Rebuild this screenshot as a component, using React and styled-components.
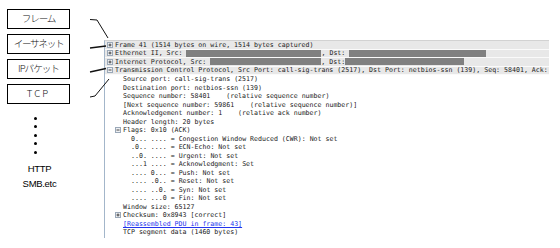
import React from "react";
import styled, { createGlobalStyle } from "styled-components";

const Global = createGlobalStyle`
  html, body { margin: 0; padding: 0; background: #fff; }
  body { width: 560px; height: 248px; overflow: hidden; }
`;

const Page = styled.div`
  position: relative;
  display: flex;
  align-items: flex-start;
  width: 560px;
  height: 248px;
  background: #fff;
`;

const Legend = styled.div`
  display: flex;
  flex-direction: column;
  align-items: center;
  width: 63px;
  margin-left: 7px;
  padding-top: 9px;
`;

const LayerBox = styled.div`
  box-sizing: border-box;
  width: 63px;
  height: 20px;
  margin-bottom: 5px;
  border: 1px solid #000;
  display: flex;
  align-items: center;
  justify-content: center;
  font-family: "Noto Sans CJK JP", "Liberation Sans", sans-serif;
  font-size: 9.6px;
  font-weight: 300;
  letter-spacing: ${(p) => p.$spacing}px;
  color: #111;
  line-height: 1;
`;

const Dots = styled.div`
  align-self: flex-start;
  display: flex;
  flex-direction: column;
  gap: 5.5px;
  margin-left: 26.5px;
  margin-top: 7.5px;
`;

const Dot = styled.span`
  display: block;
  width: 3px;
  height: 3px;
  border-radius: 50%;
  background: #000;
`;

const Protocols = styled.div`
  margin-top: 7px;
  margin-left: 2px;
  font-family: "Liberation Sans", Arial, sans-serif;
  font-size: 9.5px;
  letter-spacing: -0.3px;
  line-height: 15px;
  text-align: center;
  color: #000;
`;

const Pane = styled.div`
  box-sizing: border-box;
  width: 445px;
  height: 198px;
  margin-top: 40px;
  margin-left: 34px;
  border-left: 1px solid #a3b6ca;
  border-top: 1px solid #d2d2d2;
  overflow: hidden;
  font-family: "DejaVu Sans Mono", "Liberation Mono", monospace;
  font-size: 6.6px;
  color: #222;
`;

const Row = styled.div`
  box-sizing: border-box;
  display: flex;
  align-items: center;
  height: 8.5px;
  padding-left: ${(p) => p.$level * 8}px;
  white-space: pre;
  background: ${(p) => (p.$top ? "#e8e8e8" : "transparent")};
  border-bottom: ${(p) => (p.$top ? "1px solid #fafafa" : "0")};
`;

const Slot = styled.span`
  flex: none;
  display: flex;
  align-items: center;
  width: 10px;
  height: 100%;
  padding-left: 1.5px;
  box-sizing: border-box;
`;

const Label = styled.span`
  flex: none;
  display: flex;
  align-items: center;
  line-height: 8.5px;
  color: ${(p) => (p.$link ? "#2233ee" : "#222")};
  text-decoration: ${(p) => (p.$link ? "underline" : "none")};
`;

const Redacted = styled.span`
  display: inline-block;
  height: 7px;
  background: #808080;
`;

const Overlay = styled.svg`
  position: absolute;
  left: 0;
  top: 0;
  pointer-events: none;
`;

function Expander({ open }) {
  return (
    <svg width="6" height="6" viewBox="0 0 6 6">
      <rect x="0.5" y="0.5" width="5" height="5" fill="#eef0f3" stroke="#9aa8b8" strokeWidth="1" />
      <line x1="1.5" y1="3" x2="4.5" y2="3" stroke="#333" strokeWidth="0.9" />
      {!open && <line x1="3" y1="1.5" x2="3" y2="4.5" stroke="#333" strokeWidth="0.9" />}
    </svg>
  );
}

const rows = [
  { level: 0, exp: "plus", top: true, content: ["Frame 41 (1514 bytes on wire, 1514 bytes captured)"] },
  { level: 0, exp: "plus", top: true, content: ["Ethernet II, Src: ", { bar: 135 }, ", Dst: ", { bar: 137 }] },
  { level: 0, exp: "plus", top: true, content: ["Internet Protocol, Src: ", { bar: 111 }, ", Dst:", { bar: 119 }] },
  {
    level: 0,
    exp: "minus",
    top: true,
    content: ["Transmission Control Protocol, Src Port: call-sig-trans (2517), Dst Port: netbios-ssn (139), Seq: 58401, Ack:"],
  },
  { level: 1, content: ["Source port: call-sig-trans (2517)"] },
  { level: 1, content: ["Destination port: netbios-ssn (139)"] },
  { level: 1, content: ["Sequence number: 58401    (relative sequence number)"] },
  { level: 1, content: ["[Next sequence number: 59861    (relative sequence number)]"] },
  { level: 1, content: ["Acknowledgement number: 1    (relative ack number)"] },
  { level: 1, content: ["Header length: 20 bytes"] },
  { level: 1, exp: "minus", content: ["Flags: 0x10 (ACK)"] },
  { level: 2, content: ["0... .... = Congestion Window Reduced (CWR): Not set"] },
  { level: 2, content: [".0.. .... = ECN-Echo: Not set"] },
  { level: 2, content: ["..0. .... = Urgent: Not set"] },
  { level: 2, content: ["...1 .... = Acknowledgment: Set"] },
  { level: 2, content: [".... 0... = Push: Not set"] },
  { level: 2, content: [".... .0.. = Reset: Not set"] },
  { level: 2, content: [".... ..0. = Syn: Not set"] },
  { level: 2, content: [".... ...0 = Fin: Not set"] },
  { level: 1, content: ["Window size: 65127"] },
  { level: 1, exp: "plus", content: ["Checksum: 0x8943 [correct]"] },
  { level: 1, link: true, content: ["[Reassembled PDU in frame: 43]"] },
  { level: 1, content: ["TCP segment data (1460 bytes)"] },
];

const layers = [
  { text: "フレーム", spacing: -1.2 },
  { text: "イーサネット", spacing: -1.3 },
  { text: "IPパケット", spacing: -1 },
  { text: "TCP", spacing: 2 },
];

export default function App() {
  return (
    <>
      <Global />
      <Page>
        <Legend>
          {layers.map((l) => (
            <LayerBox key={l.text} $spacing={l.spacing}>
              {l.text}
            </LayerBox>
          ))}
          <Dots>
            {[0, 1, 2, 3, 4].map((i) => (
              <Dot key={i} />
            ))}
          </Dots>
          <Protocols>
            HTTP
            <br />
            SMB.etc
          </Protocols>
        </Legend>
        <Pane>
          {rows.map((r, i) => (
            <Row key={i} $level={r.level} $top={r.top}>
              <Slot>{r.exp && <Expander open={r.exp === "minus"} />}</Slot>
              <Label $link={r.link}>
                {r.content.map((c, j) =>
                  typeof c === "string" ? (
                    <span key={j}>{c}</span>
                  ) : (
                    <Redacted key={j} style={{ width: c.bar }} />
                  )
                )}
              </Label>
            </Row>
          ))}
        </Pane>
        <Overlay width="560" height="248" viewBox="0 0 560 248">
          <g fill="none" stroke="#111" strokeWidth="1">
            <polyline points="90,19.5 97,20 108,38" />
            <polyline points="90,48 106,46" strokeWidth="1.3" />
            <polyline points="90,72 106,68.5" strokeWidth="1.3" />
            <polyline points="90,97 95,96 109,79" />
          </g>
        </Overlay>
      </Page>
    </>
  );
}
